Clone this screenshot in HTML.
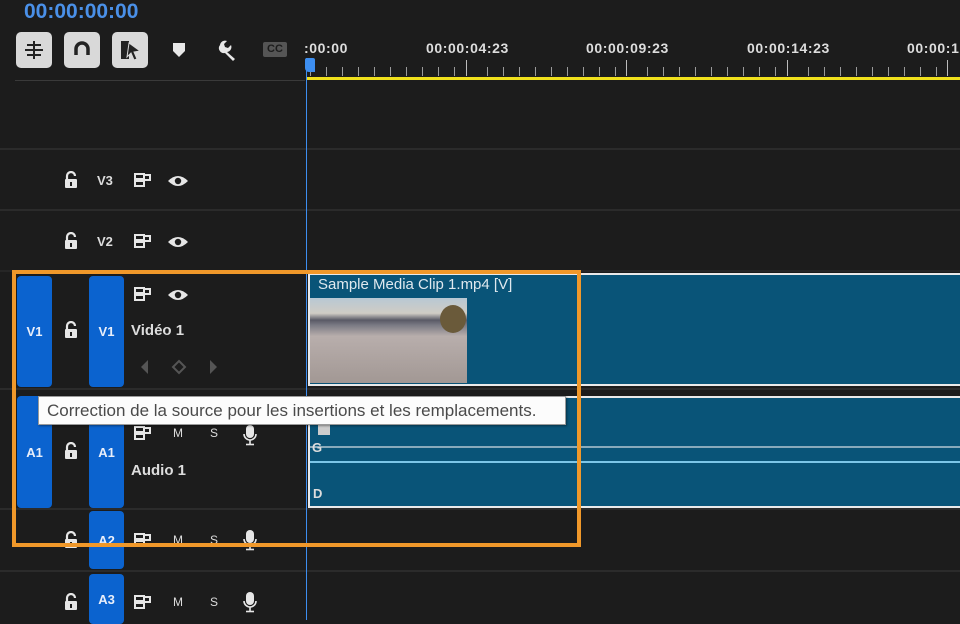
<!DOCTYPE html>
<html><head><meta charset="utf-8"><style>
*{margin:0;padding:0;box-sizing:border-box}
body{width:960px;height:620px;background:#1c1c1c;position:relative;overflow:hidden;font-family:"Liberation Sans",sans-serif}
.a{position:absolute}
.sep{position:absolute;left:0;width:960px;height:2px;background:#2b2b2b}
.btn{position:absolute;background:#0b63cf;border-radius:4px;color:#e8eefa;font-size:13px;font-weight:bold;display:flex;align-items:center;justify-content:center}
.lbl{position:absolute;color:#ddd;font-size:13px;font-weight:bold}
.ic{position:absolute}
.tb{position:absolute;top:32px;width:36px;height:36px;background:#d9d9d9;border-radius:5px}
.tick{position:absolute;width:1px;background:#9a9a9a}
.tc{position:absolute;top:40px;color:#ddd;font-size:14px;font-weight:bold;letter-spacing:0.6px}
</style></head><body>
<div class="a" style="left:24px;top:0px;color:#4a90e8;font-size:21px;font-weight:bold">00:00:00:00</div>
<div class="tb" style="left:16px"><svg width="36" height="36"><g stroke="#222" stroke-width="2"><line x1="18" y1="9" x2="18" y2="27"/><line x1="11" y1="13" x2="25" y2="13"/><line x1="9" y1="18" x2="27" y2="18"/><line x1="11" y1="23" x2="25" y2="23"/></g></svg></div>
<div class="tb" style="left:64px"><svg width="36" height="36"><path d="M12 23 V17 a6 6 0 0 1 12 0 V23" stroke="#222" stroke-width="3.5" fill="none"/></svg></div>
<div class="tb" style="left:112px"><svg width="36" height="36"><rect x="9" y="9" width="8" height="18" fill="#222"/><path d="M17 11 L28 19 L22 20 L25 27 L22 28 L19 21 L15 25 Z" fill="#222" stroke="#d9d9d9" stroke-width="1"/></svg></div>
<svg class="ic" style="left:172px;top:42px" width="14" height="16"><path d="M1 1 H13 V9 L7 15 L1 9 Z" fill="#e8e8e8"/></svg>
<svg class="ic" style="left:216px;top:39px" width="22" height="22"><path d="M4 6 a5 5 0 0 1 7 -4 L8 5 L9 8 L12 9 L15 6 a5 5 0 0 1 -4 7 L19 20 L17 22 L9 14 a5 5 0 0 1 -5 -8Z" fill="#e8e8e8"/></svg>
<div class="a" style="left:263px;top:42px;width:24px;height:15px;background:#555;border-radius:2px;color:#1c1c1c;font-size:11px;font-weight:bold;text-align:center;line-height:15px">CC</div>
<div class="tc" style="left:304px">:00:00</div>
<div class="tc" style="left:426px">00:00:04:23</div>
<div class="tc" style="left:586px">00:00:09:23</div>
<div class="tc" style="left:747px">00:00:14:23</div>
<div class="tc" style="left:907px">00:00:1</div>
<div id="ticks"></div>
<div class="a" style="left:306px;top:77px;width:654px;height:3px;background:#f0e01c"></div>
<div class="a" style="left:15px;top:80px;width:290px;height:1px;background:#3a3a3a"></div>
<div class="a" style="left:305px;top:58px;width:10px;height:14px;background:#3d8ef0;border-radius:2px 2px 0 4px"></div>
<div class="sep" style="top:148px"></div>
<div class="sep" style="top:209px"></div>
<div class="sep" style="top:270px;background:#262626"></div>
<div class="sep" style="top:388px"></div>
<div class="sep" style="top:508px"></div>
<div class="sep" style="top:570px"></div>
<div class="a" style="left:306px;top:58px;width:1px;height:562px;background:#3d8ef0"></div>

<!-- clips -->
<div class="a" style="left:308px;top:273px;width:660px;height:113px;background:#095478;border:2px solid #eaeaea"></div>
<div class="a" style="left:318px;top:276px;color:#dfe8ee;font-size:15px">Sample Media Clip 1.mp4 [V]</div>
<div class="a" style="left:310px;top:298px;width:157px;height:85px;background:linear-gradient(180deg,#b8c8d4 0%,#d0ccc4 18%,#5a5a66 26%,#7a7a84 32%,#b8aeac 45%,#a29894 100%)"></div>
<div class="a" style="left:440px;top:305px;width:26px;height:28px;background:#6a5a3a;border-radius:50%"></div>
<div class="a" style="left:308px;top:396px;width:660px;height:112px;background:#095478;border:2px solid #eaeaea"></div>
<div class="a" style="left:310px;top:446px;width:650px;height:2px;background:#8ab"></div>
<div class="a" style="left:310px;top:461px;width:650px;height:2px;background:#7cc6e8"></div>
<div class="a" style="left:312px;top:440px;color:#ddd;font-size:13px;font-weight:bold">G</div>
<div class="a" style="left:313px;top:486px;color:#ddd;font-size:13px;font-weight:bold">D</div>
<div class="a" style="left:318px;top:424px;width:12px;height:11px;background:#ccc"></div>

<div class="lbl" style="left:97px;top:173px">V3</div>
<div class="lbl" style="left:97px;top:234px">V2</div>
<div class="btn" style="left:17px;top:276px;width:35px;height:111px">V1</div>
<div class="btn" style="left:89px;top:276px;width:35px;height:111px">V1</div>
<div class="lbl" style="left:131px;top:322px;font-size:15px">Vidéo 1</div>
<svg class="ic" style="left:138px;top:358px" width="84" height="18"><path d="M10 2 L3 9 L10 16Z" fill="#555"/><path d="M41 3 L47 9 L41 15 L35 9Z" fill="none" stroke="#555" stroke-width="2"/><path d="M72 2 L79 9 L72 16Z" fill="#555"/></svg>
<div class="btn" style="left:17px;top:396px;width:35px;height:112px">A1</div>
<div class="btn" style="left:89px;top:396px;width:35px;height:112px">A1</div>
<div class="lbl" style="left:131px;top:462px;font-size:15px">Audio 1</div>
<div class="btn" style="left:89px;top:511px;width:35px;height:58px">A2</div>
<div class="btn" style="left:89px;top:574px;width:35px;height:50px">A3</div>

<div id="icons"></div>

<div class="a" style="left:12px;top:270px;width:569px;height:277px;border:4px solid #f0982a"></div>
<div class="a" style="left:38px;top:396px;width:528px;height:29px;background:#fcfcfc;border:1px solid #9a9a9a;color:#4a4a4a;font-size:17px;padding-left:8px;line-height:27px;white-space:nowrap;box-shadow:1px 1px 2px rgba(0,0,0,.4)">Correction de la source pour les insertions et les remplacements.</div>

<script>
var t='';
for(var i=0;i<41;i++){var x=310+i*16.05;if(i%10==0&&i>0)continue;t+='<div class="tick" style="left:'+Math.round(x)+'px;top:67px;height:9px"></div>';}
[466,626,787,947].forEach(function(x){t+='<div class="tick" style="left:'+x+'px;top:60px;height:16px;background:#bbb"></div>';});
document.getElementById('ticks').innerHTML=t;
function lock(x,y){return '<svg class="ic" style="left:'+x+'px;top:'+y+'px" width="16" height="18"><path d="M4 8 V5 a4 4 0 0 1 8 0" stroke="#e6e6e6" stroke-width="2.2" fill="none"/><rect x="2" y="8" width="12" height="9" rx="1" fill="#e6e6e6"/><rect x="7" y="11" width="2" height="4" fill="#1c1c1c"/></svg>';}
function sync(x,y){return '<svg class="ic" style="left:'+x+'px;top:'+y+'px" width="18" height="14"><g fill="none" stroke="#e6e6e6" stroke-width="2"><rect x="1" y="1" width="9" height="5"/><rect x="1" y="8" width="9" height="5"/><path d="M10 2 H16 V7 H10"/></g></svg>';}
function eye(x,y){return '<svg class="ic" style="left:'+x+'px;top:'+y+'px" width="22" height="14"><path d="M1 7 Q11 -3 21 7 Q11 17 1 7Z" fill="#e6e6e6"/><circle cx="11" cy="7" r="3.2" fill="#1c1c1c"/></svg>';}
function mic(x,y){return '<svg class="ic" style="left:'+x+'px;top:'+y+'px" width="16" height="22"><rect x="4" y="1" width="8" height="13" rx="4" fill="#e6e6e6"/><path d="M2 10 a6 6 0 0 0 12 0" stroke="#e6e6e6" stroke-width="1.6" fill="none"/><line x1="8" y1="16" x2="8" y2="20" stroke="#e6e6e6" stroke-width="1.6"/><line x1="4" y1="20.5" x2="12" y2="20.5" stroke="#e6e6e6" stroke-width="1.6"/></svg>';}
function ms(x,y){return '<div class="a" style="left:'+x+'px;top:'+y+'px;color:#ddd;font-size:12px">M</div><div class="a" style="left:'+(x+37)+'px;top:'+y+'px;color:#ddd;font-size:12px">S</div>';}
var h='';
h+=lock(63,171)+sync(134,173)+eye(167,174);
h+=lock(63,232)+sync(134,234)+eye(167,235);
h+=sync(134,287)+eye(167,288);
h+=lock(63,321);
h+=sync(134,426)+ms(173,426)+mic(242,424);
h+=lock(63,442);
h+=lock(63,531)+sync(134,533)+ms(173,533)+mic(242,529);
h+=lock(63,593)+sync(134,595)+ms(173,595)+mic(242,591);
document.getElementById('icons').innerHTML=h;
</script>
</body></html>
